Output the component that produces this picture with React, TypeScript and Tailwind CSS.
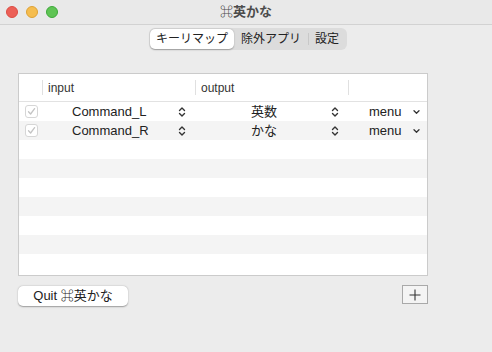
const font = { fontFamily: '"Liberation Sans", "Noto Sans CJK JP", sans-serif' };

function UpDown() {
  return (
    <svg width="8" height="12" viewBox="0 0 8 12" className="shrink-0">
      <path d="M1.5 4.5 L4 2 L6.5 4.5 M1.5 7.5 L4 10 L6.5 7.5" fill="none" stroke="#333" strokeWidth="1.4" strokeLinecap="round" strokeLinejoin="round" />
    </svg>
  );
}

function Down() {
  return (
    <svg width="7" height="6" viewBox="0 0 7 6" className="shrink-0">
      <path d="M1 1.8 L3.5 4.2 L6 1.8" fill="none" stroke="#333" strokeWidth="1.3" strokeLinecap="round" strokeLinejoin="round" />
    </svg>
  );
}

function Check() {
  return (
    <div className="flex h-[13px] w-[13px] items-center justify-center rounded-[3px] border border-[#d6d6d6] bg-white">
      <svg width="9" height="9" viewBox="0 0 9 9">
        <path d="M1.5 4.8 L3.6 7 L7.6 1.6" fill="none" stroke="#c4c4c4" strokeWidth="1.3" strokeLinecap="round" strokeLinejoin="round" />
      </svg>
    </div>
  );
}

const rows = [
  { input: 'Command_L', output: '英数' },
  { input: 'Command_R', output: 'かな' },
];

export default function App() {
  return (
    <div className="flex h-[352px] w-[492px] flex-col bg-[#ececec] text-[#222]" style={font}>
      {/* title bar */}
      <div className="grid h-[25px] grid-cols-[1fr_auto_1fr] items-center border-b border-[#d2d2d2] bg-[#e9e9e9]">
        <div className="flex items-center gap-[8px] pl-[6px]">
          <span className="h-[12px] w-[12px] rounded-full border border-[#dd4c43] bg-[#ec6057]" />
          <span className="h-[12px] w-[12px] rounded-full border border-[#dea235] bg-[#f5bd4f]" />
          <span className="h-[12px] w-[12px] rounded-full border border-[#3ea93a] bg-[#5fc454]" />
        </div>
        <div className="text-[13px] font-bold text-[#4c4c4c]">⌘英かな</div>
        <div />
      </div>

      {/* segmented control */}
      <div className="mt-[3px] flex justify-center pl-[4px]">
        <div className="flex h-[22px] items-center rounded-[6px] bg-[#dcdcdc] p-[1px] text-[12px]">
          <div className="flex h-full items-center rounded-[5px] bg-white px-[6px] shadow-[0_0.5px_1.5px_rgba(0,0,0,0.3)]">キーリマップ</div>
          <div className="flex h-full items-center px-[7px]">除外アプリ</div>
          <div className="h-[12px] w-px bg-[#c8c8c8]" />
          <div className="flex h-full items-center pl-[6px] pr-[7px]">設定</div>
        </div>
      </div>

      {/* table */}
      <div className="mx-[18px] mt-[23px] flex h-[203px] w-[410px] flex-col border border-[#cbcbcb] bg-white">
        <div className="flex h-[28px] shrink-0 items-center border-b border-[#e2e2e2] text-[12px] text-[#333]">
          <div className="w-[23px]" />
          <div className="h-[15px] w-px bg-[#e0e0e0]" />
          <div className="w-[152px] pl-[5px]">input</div>
          <div className="h-[15px] w-px bg-[#e0e0e0]" />
          <div className="w-[152px] pl-[5px]">output</div>
          <div className="h-[15px] w-px bg-[#e0e0e0]" />
          <div className="flex-1" />
        </div>
        {Array.from({ length: 9 }).map((_, i) => {
          const r = rows[i];
          return (
            <div key={i} className={`flex h-[19px] shrink-0 items-center text-[13px] ${i % 2 === 1 ? 'bg-[#f4f4f4]' : 'bg-white'}`}>
              {r && (
                <>
                  <div className="flex w-[24px] justify-center pl-[1px]">
                    <Check />
                  </div>
                  <div className="flex w-[153px] items-center justify-between pl-[29px] pr-[10px]">
                    <span>{r.input}</span>
                    <UpDown />
                  </div>
                  <div className="flex w-[153px] items-center justify-between pl-[55px] pr-[10px]">
                    <span>{r.output}</span>
                    <UpDown />
                  </div>
                  <div className="flex flex-1 items-center justify-between pl-[20px] pr-[7px]">
                    <span>menu</span>
                    <Down />
                  </div>
                </>
              )}
            </div>
          );
        })}
      </div>

      {/* bottom buttons */}
      <div className="mx-[18px] mt-[9px] flex w-[410px] items-start justify-between">
        <button className="mt-[1px] h-[20px] w-[110px] rounded-[5px] bg-white text-[13px] shadow-[0_0.5px_1.5px_rgba(0,0,0,0.35)]">
          Quit ⌘英かな
        </button>
        <button className="flex h-[19px] w-[26px] items-center justify-center border border-[#a9a9a9] bg-[#f4f4f4]">
          <svg width="12" height="12" viewBox="0 0 12 12">
            <path d="M6 0.5 V11.5 M0.5 6 H11.5" stroke="#333" strokeWidth="1.1" />
          </svg>
        </button>
      </div>
    </div>
  );
}
